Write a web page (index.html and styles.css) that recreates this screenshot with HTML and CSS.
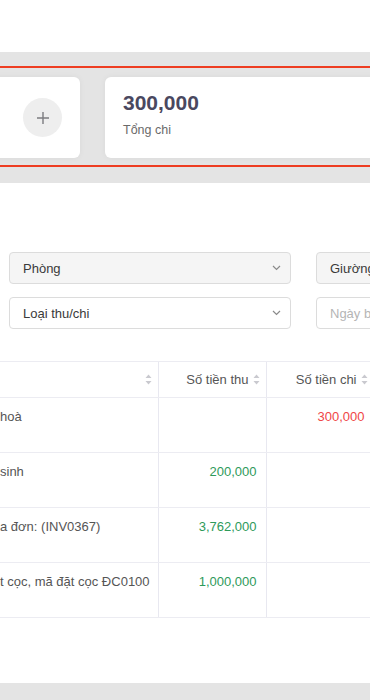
FILE: index.html
```html
<!DOCTYPE html>
<html lang="vi">
<head>
<meta charset="utf-8">
<title>Thu chi</title>
<link rel="stylesheet" href="styles.css">
</head>
<body>
<div class="top"></div>
<section class="band">
  <div class="summary">
    <div class="card card-add">
      <span class="plus-btn">
        <svg width="14" height="14" viewBox="0 0 14 14"><path d="M7 1v12M1 7h12" stroke="#7c7c80" stroke-width="1.4" fill="none"/></svg>
      </span>
    </div>
    <div class="card card-stat">
      <div class="amount">300,000</div>
      <div class="label">Tổng chi</div>
    </div>
  </div>
</section>
<section class="panel">
  <div class="filters">
    <div class="select disabled"><span>Phòng</span><svg class="chev" width="9" height="6" viewBox="0 0 9 6"><path d="M1 1l3.5 3.5L8 1" stroke="#8a8a8a" stroke-width="1.2" fill="none"/></svg></div>
    <div class="select disabled"><span>Giường</span></div>
    <div class="select"><span>Loại thu/chi</span><svg class="chev" width="9" height="6" viewBox="0 0 9 6"><path d="M1 1l3.5 3.5L8 1" stroke="#8a8a8a" stroke-width="1.2" fill="none"/></svg></div>
    <div class="select"><span class="placeholder">Ngày bắt đầu</span></div>
  </div>
  <table class="grid">
    <colgroup><col class="c1"><col class="c2"><col class="c3"><col class="c4"></colgroup>
    <thead>
      <tr>
        <th><span class="th-in"><span></span><svg class="sort" width="7" height="11" viewBox="0 0 7 11"><path d="M3.5 0.5L6.5 4H0.5z M3.5 10.5L6.5 7H0.5z" fill="#c9c9cf"/></svg></span></th>
        <th><span class="th-in"><span>Số tiền thu</span><svg class="sort" width="7" height="11" viewBox="0 0 7 11"><path d="M3.5 0.5L6.5 4H0.5z M3.5 10.5L6.5 7H0.5z" fill="#c9c9cf"/></svg></span></th>
        <th><span class="th-in"><span>Số tiền chi</span><svg class="sort" width="7" height="11" viewBox="0 0 7 11"><path d="M3.5 0.5L6.5 4H0.5z M3.5 10.5L6.5 7H0.5z" fill="#c9c9cf"/></svg></span></th>
        <th></th>
      </tr>
    </thead>
    <tbody>
      <tr><td class="desc">hoà</td><td class="num"></td><td class="num out">300,000</td><td></td></tr>
      <tr><td class="desc">sinh</td><td class="num in">200,000</td><td class="num"></td><td></td></tr>
      <tr><td class="desc">a đơn: (INV0367)</td><td class="num in">3,762,000</td><td class="num"></td><td></td></tr>
      <tr><td class="desc">t cọc, mã đặt cọc ĐC0100</td><td class="num in">1,000,000</td><td class="num"></td><td></td></tr>
    </tbody>
  </table>
</section>
<div class="bottom"></div>
</body>
</html>
```
FILE: styles.css
```css
* { box-sizing: border-box; }
html, body { margin: 0; padding: 0; }
body {
  font-family: "Liberation Sans", Arial, sans-serif;
  color: #555;
  background: #fff;
  overflow: hidden;
  width: 370px;
}
.top { height: 52px; background: #fff; }
.band {
  background: #e4e4e4;
  padding: 14px 0 16px;
}
.summary {
  display: grid;
  grid-template-columns: 180px 1fr;
  column-gap: 25px;
  margin: 0 -60px 0 -100px;
  padding: 9px 0 7px;
  border-top: 2px solid #ee3d22;
  border-bottom: 2px solid #ee3d22;
}
.card {
  background: #fff;
  border-radius: 6px;
  height: 81px;
  box-shadow: 0 0 6px rgba(0,0,0,0.05);
}
.card-add {
  display: flex;
  align-items: center;
  justify-content: flex-end;
  padding-right: 18px;
}
.plus-btn {
  width: 39px;
  height: 39px;
  border-radius: 50%;
  background: #eeeeee;
  display: flex;
  align-items: center;
  justify-content: center;
}
.card-stat { padding: 12px 18px 0; }
.amount {
  font-size: 21px;
  font-weight: bold;
  line-height: 28px;
  color: #4a485f;
}
.label {
  margin-top: 4px;
  font-size: 12.5px;
  line-height: 18px;
  color: #6a6a6a;
}
.panel {
  background: #fff;
  padding: 69px 0 65px;
}
.filters {
  display: grid;
  grid-template-columns: 282px 282px;
  column-gap: 25px;
  row-gap: 13px;
  margin-left: 9px;
}
.select {
  height: 32px;
  border: 1px solid #dcdcdc;
  border-radius: 4px;
  background: #fff;
  display: flex;
  align-items: center;
  justify-content: space-between;
  padding: 0 9px 0 13px;
  font-size: 13px;
  color: #3a3a3a;
}
.select.disabled { background: #f5f5f5; }
.placeholder { color: #b5b5b5; }
.chev { flex: none; }
.grid {
  margin-top: 32px;
  border-collapse: collapse;
  table-layout: fixed;
  width: 482px;
  font-size: 13px;
}
.c1 { width: 158px; }
.c2, .c3, .c4 { width: 108px; }
.grid th {
  height: 36px;
  padding: 0 6px 0 0;
  font-weight: normal;
  color: #555;
  border-top: 1px solid #ececf2;
  border-bottom: 1px solid #ececf2;
  border-left: 1px solid #e8e8f0;
  text-align: right;
}
.grid th:first-child, .grid td:first-child { border-left: none; }
.th-in {
  display: flex;
  align-items: center;
  justify-content: flex-end;
  gap: 4px;
}
.sort { flex: none; }
.grid td {
  height: 55px;
  padding: 10px 9px 0 0;
  vertical-align: top;
  line-height: 18px;
  border-bottom: 1px solid #ececf2;
  border-left: 1px solid #e8e8f0;
  color: #555;
  white-space: nowrap;
}
.grid td.desc { padding-left: 0; overflow: hidden; }
.num { text-align: right; }
.num.in { color: #2e9a5a; }
.num.out { color: #f04646; }
.bottom { height: 19px; background: #e4e4e4; }
```
